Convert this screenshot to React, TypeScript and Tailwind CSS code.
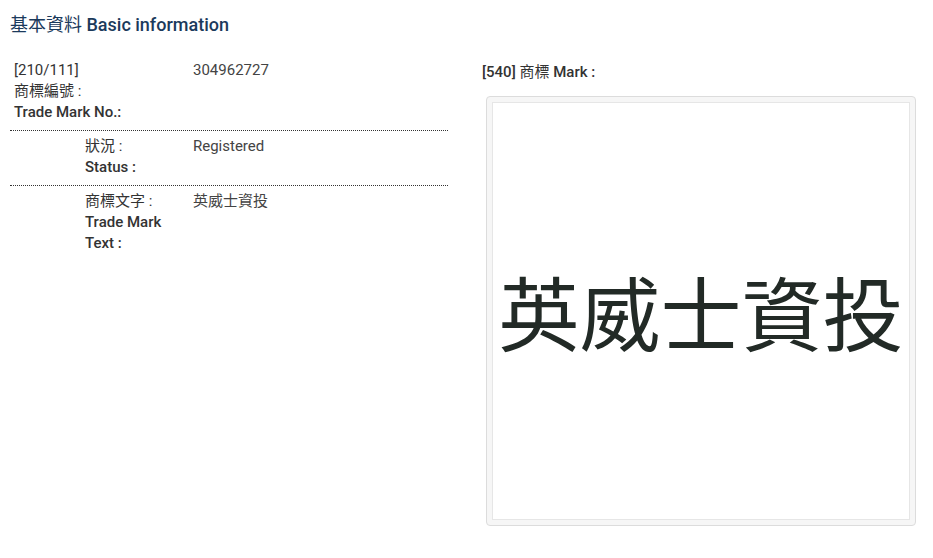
const rows = [
  {
    zh: "[210/111]",
    zh2: "商標編號 :",
    en: "Trade Mark No.:",
    value: "304962727",
    indent: false,
  },
  { zh: "狀況 :", en: "Status :", value: "Registered", indent: true },
  { zh: "商標文字 :", en: "Trade Mark Text :", value: "英威士資投", indent: true },
];

export default function App() {
  return (
    <div className="h-[558px] w-[933px] bg-white font-['Roboto','Noto_Sans_CJK_TC',sans-serif] text-[15px] leading-[21px] text-[#333]">
      <h2 className="pl-[10px] pt-[14px] text-[18px] leading-[22px] font-medium text-[#1b3a5c]">
        <span className="font-normal">基本資料</span> Basic information
      </h2>

      <div className="mt-[19px] flex">
        {/* left column */}
        <div className="ml-[10px] w-[438px]">
          {rows.map((row, i) => (
            <div
              key={row.value}
              className={
                i < rows.length - 1
                  ? "flex border-b border-dotted border-[#333] pt-[5px] pb-[7px]"
                  : "flex pt-[5px] pb-[7px]"
              }
            >
              <div className={row.indent ? "w-[183px] pl-[75px]" : "w-[183px] pl-[4px]"}>
                <div>{row.zh}</div>
                {row.zh2 && <div>{row.zh2}</div>}
                <div className="font-medium">{row.en}</div>
              </div>
              <div className="text-[#444]">{row.value}</div>
            </div>
          ))}
        </div>

        {/* right column */}
        <div className="ml-[34px] flex flex-col">
          <div className="pt-[7px] font-medium">
            [540] <span className="font-normal">商標</span> Mark :
          </div>
          <div className="mt-[13px] ml-[4px] h-[430px] w-[430px] rounded-[4px] border border-[#dcdcdc] bg-[#f6f6f6] p-[5px]">
            <div className="flex h-full w-full items-center justify-center border border-[#e6e6e6] bg-white">
              <span className="-mt-[4px] font-['Noto_Sans_CJK_TC',sans-serif] text-[81px] leading-none font-normal text-[#222a26]">
                英威士資投
              </span>
            </div>
          </div>
        </div>
      </div>
    </div>
  );
}
